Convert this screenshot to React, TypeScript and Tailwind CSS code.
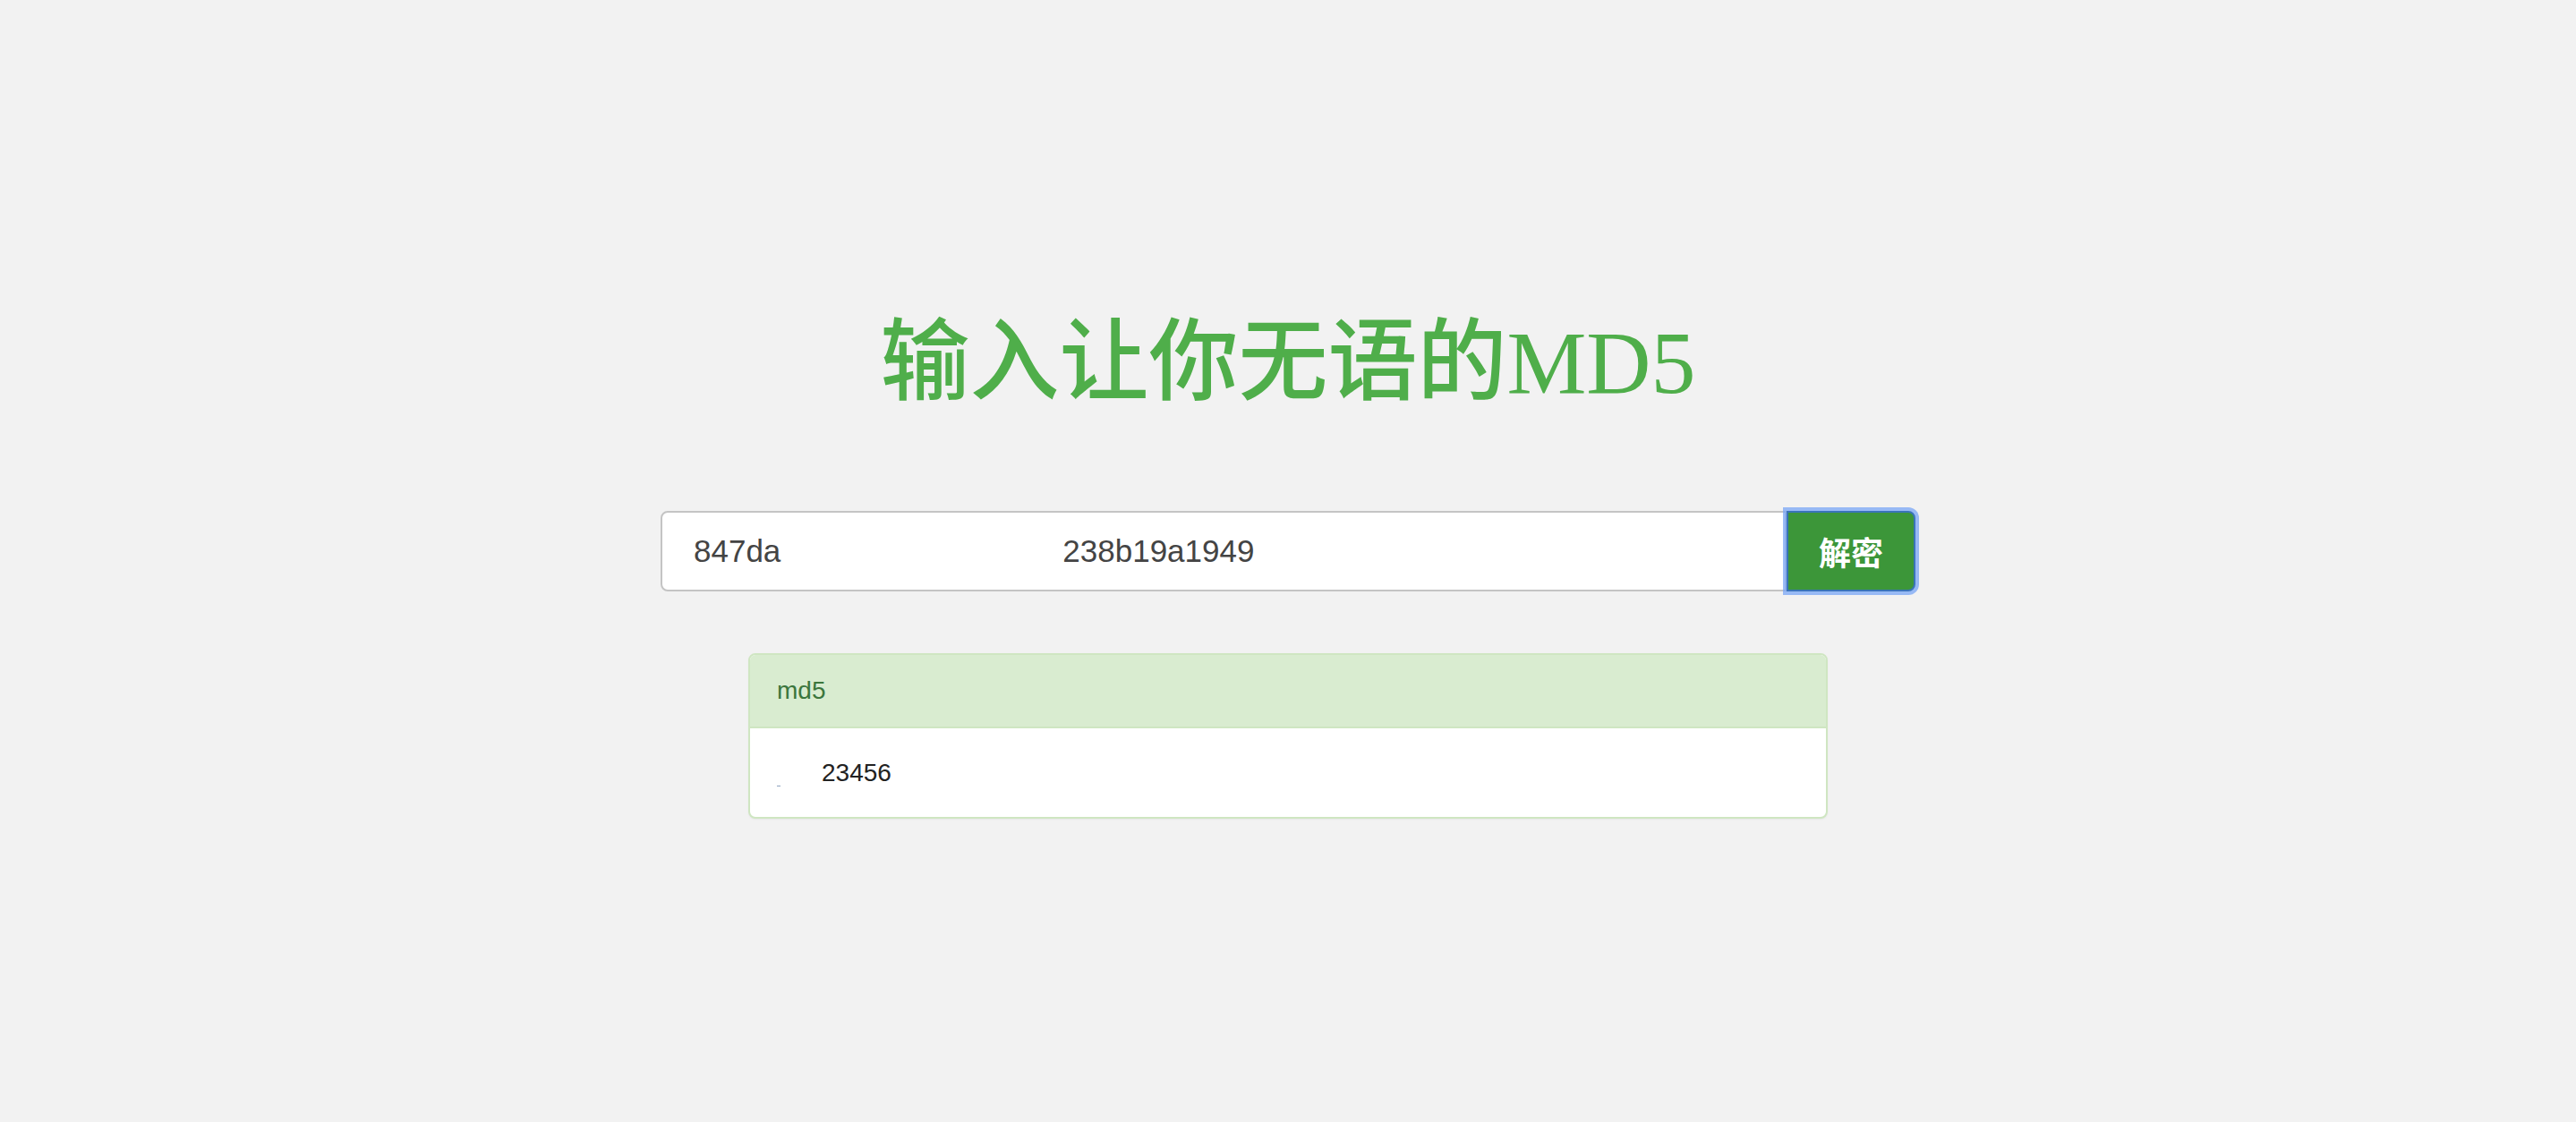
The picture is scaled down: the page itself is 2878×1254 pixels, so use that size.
export default function App() {
  return (
    <div className="min-h-[1254px] w-full bg-[#f2f2f2] flex flex-col items-center font-['Liberation_Sans','Noto_Sans_CJK_SC',sans-serif]">
      <h1 className="mt-[352px] h-[108px] leading-[108px] text-[100px] font-medium text-[#4fae4a] font-['Liberation_Serif','Noto_Sans_CJK_SC',serif] whitespace-nowrap">
        输入让你无语的MD5
      </h1>

      <div className="mt-[111px] flex w-[1402px]">
        <div className="flex-1 h-[90px] flex items-center pl-[35px] bg-white border-2 border-[#c4c4c4] rounded-l-[8px] text-[35px] text-[#444444] whitespace-nowrap">
          <span>847da</span>
          <span className="w-[315px]" />
          <span>238b19a1949</span>
        </div>
        <button className="w-[144px] h-[90px] bg-[#3c9639] text-white text-[36px] font-bold rounded-r-[8px] border-2 border-[#3a74b8] shadow-[0_0_0_4px_rgba(120,165,245,0.75)] font-['Noto_Sans_CJK_SC',sans-serif]">
          解密
        </button>
      </div>

      <div className="mt-[69px] w-[1206px] rounded-[8px] border-2 border-[#cfe6c2] bg-white overflow-hidden shadow-[0_1px_2px_rgba(0,0,0,0.05)]">
        <div className="h-[82px] flex items-center px-[30px] bg-[#d9ecd0] border-b-2 border-[#cfe6c2] text-[28px] text-[#3c763d]">
          md5
        </div>
        <div className="h-[99px] flex items-center pl-[30px] text-[28px] text-[#222222]">
          <span className="w-[4px] h-[1px] bg-[#8fa3c0] mt-[30px]" />
          <span className="ml-[46px]">23456</span>
        </div>
      </div>
    </div>
  );
}
